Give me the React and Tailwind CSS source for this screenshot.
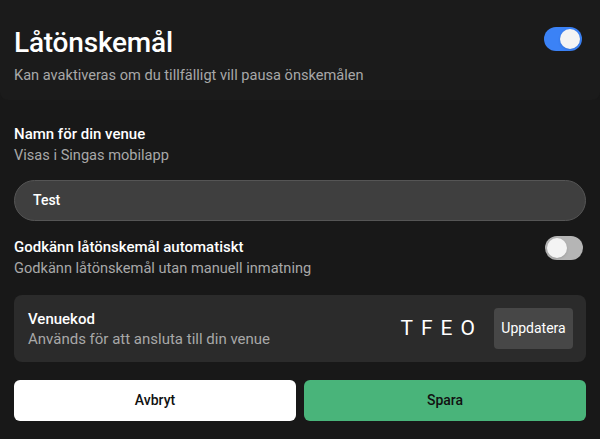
const Toggle = ({ on }) => (
  <div
    className={
      'relative w-[38px] h-[24px] rounded-full shrink-0 ' +
      (on ? 'bg-[#3b82f6]' : 'bg-[#b5b5b5]')
    }
  >
    <div
      className={
        'absolute top-[2px] w-[20px] h-[20px] rounded-full bg-[#f4f4f4] shadow ' +
        (on ? 'right-[2px]' : 'left-[2px]')
      }
    />
  </div>
)

export default function App() {
  return (
    <div
      className="w-[600px] h-[439px] bg-[#181818] text-white overflow-hidden"
      style={{ fontFamily: 'Roboto, "Noto Sans", sans-serif' }}
    >
      <div className="h-[100px] bg-[#1b1b1b] rounded-b-lg px-[14px] pt-[26px]">
        <div className="flex items-start justify-between">
          <h1 className="text-[28px] leading-[34px] font-medium tracking-[-0.2px]">Låtönskemål</h1>
          <div className="mr-[4px] mt-[1px]">
            <Toggle on />
          </div>
        </div>
        <p className="mt-[4px] text-[14.6px] text-[#a8a8a8] leading-[22px]">
          Kan avaktiveras om du tillfälligt vill pausa önskemålen
        </p>
      </div>

      <div className="px-[14px] pt-[24px]">
        <p className="text-[15px] font-medium leading-[20px]">Namn för din venue</p>
        <p className="text-[14.6px] text-[#a8a8a8] leading-[20px] mt-[1px]">Visas i Singas mobilapp</p>

        <div className="mt-[15px] h-[41px] rounded-full bg-[#3f3f3f] border border-[#555] flex items-center px-[18px]">
          <span className="text-[14px] font-medium">Test</span>
        </div>

        <div className="mt-[16px] flex items-start justify-between">
          <div>
            <p className="text-[15px] font-medium leading-[20px]">Godkänn låtönskemål automatiskt</p>
            <p className="text-[14.6px] text-[#a8a8a8] leading-[20px] mt-[1px]">
              Godkänn låtönskemål utan manuell inmatning
            </p>
          </div>
          <div className="mr-[3px] mt-[-1px]">
            <Toggle />
          </div>
        </div>

        <div className="mt-[17px] h-[67px] rounded-lg bg-[#2b2b2b] flex items-center justify-between pl-[14px] pr-[13px]">
          <div className="pt-[2px]">
            <p className="text-[15px] font-medium leading-[18px]">Venuekod</p>
            <p className="text-[15px] text-[#a8a8a8] leading-[20px] mt-[1px]">Används för att ansluta till din venue</p>
          </div>
          <div className="flex items-center gap-[19px]">
            <span className="text-[21px] tracking-[8px] font-normal mr-[-8px]">TFEO</span>
            <button className="h-[41px] w-[79px] rounded bg-[#474747] text-[14px]">
              Uppdatera
            </button>
          </div>
        </div>

        <div className="mt-[18px] flex gap-[8px]">
          <button className="flex-1 h-[41px] rounded-md bg-white text-[#111] text-[14px] font-medium">
            Avbryt
          </button>
          <button className="flex-1 h-[41px] rounded-md bg-[#49b47a] text-[#111] text-[14px] font-medium">
            Spara
          </button>
        </div>
      </div>
    </div>
  )
}
